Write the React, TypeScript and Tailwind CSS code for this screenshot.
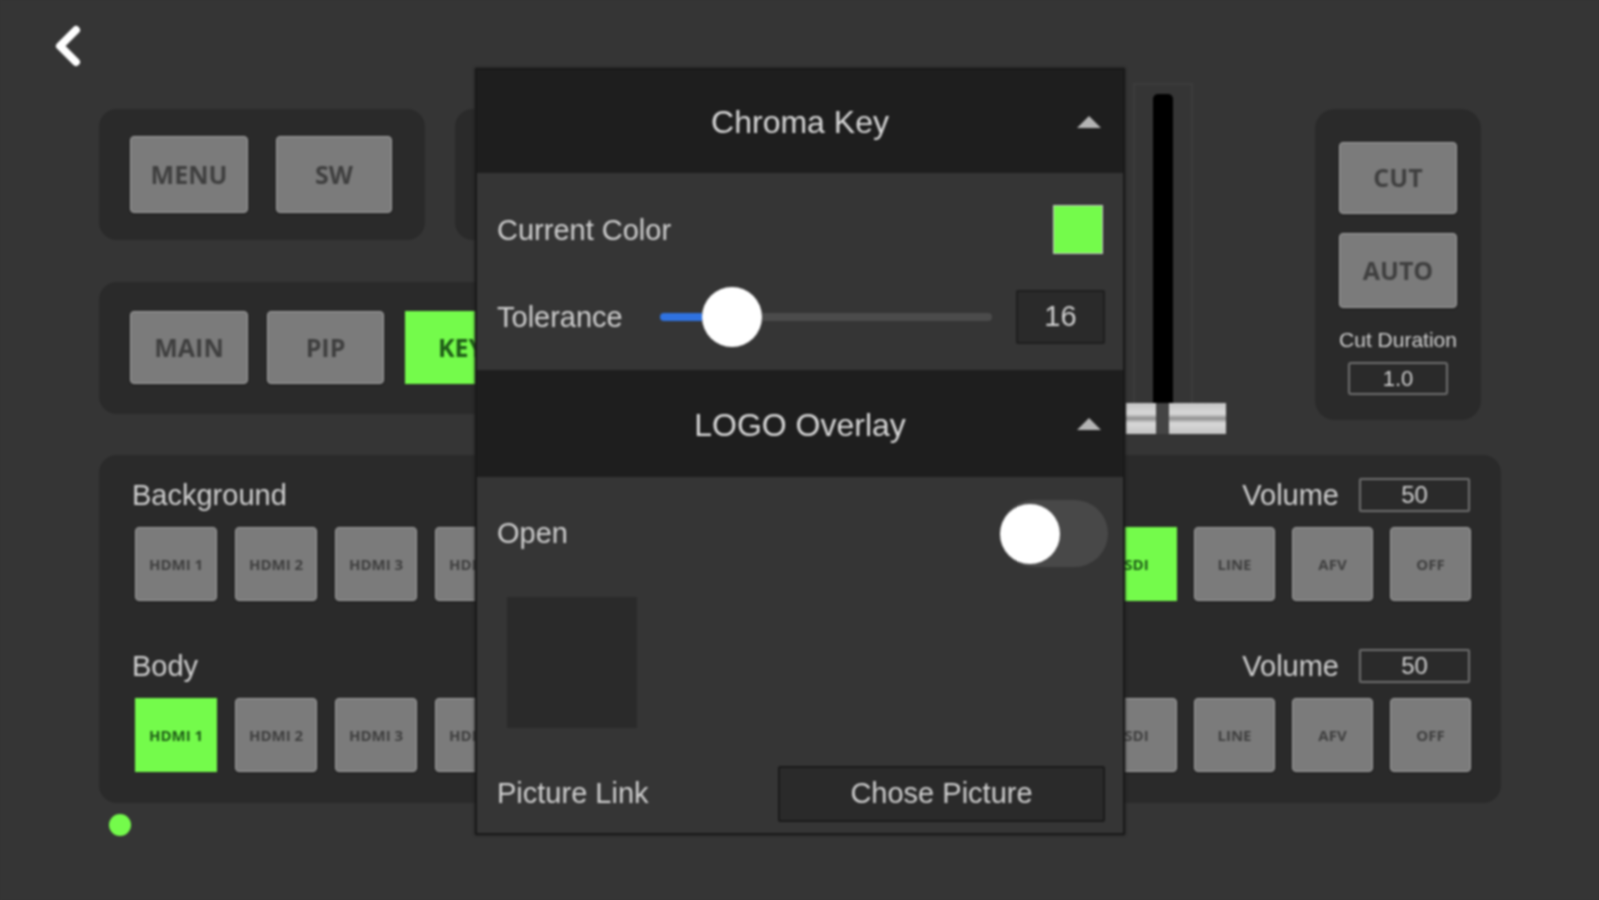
const font = "font-['Liberation_Sans',Arial,sans-serif]";

const Btn = ({ label, active, className }: { label: string; active?: boolean; className: string }) => (
  <div
    className={`flex items-center justify-center shrink-0 font-['Open_Sans',sans-serif] font-bold ${className} ${
      active
        ? "bg-[#74fb4b] text-[#1f5c18]"
        : "bg-[#7b7b7b] text-[#3f3f3f] rounded-[4px] border border-[#a2a2a2] shadow-[0_1px_2px_#1e1e1e]"
    }`}
  >
    {label}
  </div>
);

const Caret = () => (
  <svg width="26" height="14" viewBox="0 0 26 14" className="shrink-0">
    <path d="M13 1 L25 13 L1 13 Z" fill="#b4b4b4" />
  </svg>
);

const PopupHeader = ({ title, className }: { title: string; className: string }) => (
  <div className={`relative flex items-center justify-center bg-[#1e1e1e] text-[32px] text-[#d8d8d8] ${className}`}>
    <span>{title}</span>
    <div className="absolute right-[21px] top-1/2 -translate-y-1/2 flex">
      <Caret />
    </div>
  </div>
);

const SourceRow = ({
  label,
  active,
  className,
}: {
  label: string;
  active: "first" | "sdi";
  className: string;
}) => (
  <div className={className}>
    <div className="flex items-center justify-between h-[34px] mb-[15px] pr-[1px]">
      <span className="text-[29px] text-[#cfcfcf] -ml-[3px] pt-[2px]">{label}</span>
      <div className="flex items-center gap-[20px]">
        <span className="text-[29px] text-[#cfcfcf] pt-[2px]">Volume</span>
        <div className="w-[111px] h-[34px] border-2 border-[#6e6e6e] rounded-[2px] flex items-center justify-center text-[24px] text-[#cfcfcf] leading-none">
          50
        </div>
      </div>
    </div>
    <div className="flex justify-between">
      <div className="flex gap-[18px]">
        <Btn label="HDMI 1" active={active === "first"} className="w-[82px] h-[74px] text-[15px]" />
        <Btn label="HDMI 2" className="w-[82px] h-[74px] text-[15px]" />
        <Btn label="HDMI 3" className="w-[82px] h-[74px] text-[15px]" />
        <Btn label="HDMI 4" className="w-[82px] h-[74px] text-[15px]" />
      </div>
      <div className="flex gap-[17px]">
        <Btn label="SDI" active={active === "sdi"} className="w-[81px] h-[74px] text-[15px]" />
        <Btn label="LINE" className="w-[81px] h-[74px] text-[15px]" />
        <Btn label="AFV" className="w-[81px] h-[74px] text-[15px]" />
        <Btn label="OFF" className="w-[81px] h-[74px] text-[15px]" />
      </div>
    </div>
  </div>
);

export default function App() {
  return (
    <div className="w-[1599px] h-[900px] overflow-hidden bg-[#353535]">
      <div className={`relative w-[1599px] h-[900px] bg-[#353535] blur-[1px] ${font}`}>
        {/* back */}
        <div className="h-[83px] pl-[54px] pt-[24px]">
          <svg width="28" height="44" viewBox="0 0 28 44">
            <path d="M22 6 L6 22 L22 38" fill="none" stroke="#fff" strokeWidth="8" strokeLinecap="round" strokeLinejoin="round" />
          </svg>
        </div>

        {/* top controls */}
        <div className="flex h-[372px] pl-[99px]">
          <div className="w-[1010px] pt-[26px] flex flex-col gap-[42px]">
            <div className="flex gap-[30px]">
              <div className="w-[326px] h-[131px] rounded-[18px] bg-[#2a2a2a] pl-[31px] pt-[27px] flex gap-[28px]">
                <Btn label="MENU" className="w-[118px] h-[77px] text-[25px]" />
                <Btn label="SW" className="w-[116px] h-[77px] text-[25px]" />
              </div>
              <div className="flex-1 h-[131px] rounded-[18px] bg-[#2a2a2a]" />
            </div>
            <div className="h-[132px] rounded-[18px] bg-[#2a2a2a] pl-[31px] pt-[29px] flex gap-[19px]">
              <Btn label="MAIN" className="w-[118px] h-[73px] text-[25px]" />
              <Btn label="PIP" className="w-[117px] h-[73px] text-[25px]" />
              <Btn label="KEY" active className="w-[112px] h-[73px] text-[25px] ml-[2px]" />
            </div>
          </div>

          {/* fader */}
          <div className="relative ml-[24px] w-[60px] h-[322px] border-2 border-[#3c3c3c] flex justify-center pt-[9px]">
            <div className="w-[20px] h-[310px] bg-black rounded-t-[5px]" />
            <div className="absolute left-[-9px] top-[318px] flex h-[31px] w-[100px]">
              <div className="w-[30px] bg-[linear-gradient(#c4c4c4_0%,#d8d8d8_35%,#8f8f8f_50%,#d8d8d8_65%,#c4c4c4_100%)]" />
              <div className="w-[13px] bg-[#444]" />
              <div className="flex-1 bg-[linear-gradient(#c4c4c4_0%,#d8d8d8_35%,#8f8f8f_50%,#d8d8d8_65%,#c4c4c4_100%)]" />
            </div>
          </div>

          {/* cut */}
          <div className="ml-[122px] mt-[26px] w-[166px] h-[311px] rounded-[20px] bg-[#2a2a2a] pt-[33px] flex flex-col items-center">
            <Btn label="CUT" className="w-[118px] h-[72px] text-[25px]" />
            <Btn label="AUTO" className="w-[118px] h-[75px] text-[25px] mt-[19px]" />
            <span className="mt-[21px] text-[21px] leading-[22px] text-[#cfcfcf] whitespace-nowrap">Cut Duration</span>
            <div className="mt-[11px] w-[100px] h-[33px] border-2 border-[#6e6e6e] rounded-[3px] flex items-center justify-center text-[22px] text-[#cfcfcf] leading-none">
              1.0
            </div>
          </div>
        </div>

        {/* sources */}
        <div className="ml-[99px] w-[1402px] h-[348px] rounded-[18px] bg-[#2a2a2a] pl-[36px] pr-[30px] pt-[23px]">
          <SourceRow label="Background" active="sdi" className="" />
          <SourceRow label="Body" active="first" className="mt-[48px]" />
        </div>

        <div className="ml-[109px] mt-[11px] w-[22px] h-[22px] rounded-full bg-[#74fb4b]" />

        {/* popup over the panels */}
        <div className="absolute left-[475px] top-[68px] w-[650px] border-2 border-[#191919] bg-[#353535] shadow-[0_0_3px_#1e1e1e]">
          <PopupHeader title="Chroma Key" className="h-[103px]" />
          <div className="h-[197px] pl-[20px] pr-[18px] pt-[32px] text-[29px] text-[#cfcfcf]">
            <div className="flex items-center justify-between h-[49px] pr-[2px]">
              <span className="pt-[2px]">Current Color</span>
              <div className="w-[50px] h-[49px] bg-[#74fb4b] border border-[#c8c8c8]" />
            </div>
            <div className="flex items-center h-[54px] mt-[36px]">
              <span className="w-[163px] shrink-0 pt-[2px]">Tolerance</span>
              <div className="flex items-center flex-1">
                <div className="w-[42px] h-[8px] rounded-l-full bg-[#2f72e0]" />
                <div className="w-[60px] h-[60px] rounded-full bg-white shrink-0" />
                <div className="flex-1 h-[8px] rounded-r-full bg-[#4b4b4b]" />
              </div>
              <div className="ml-[24px] w-[89px] h-[54px] bg-[#2a2a2a] border-2 border-[#1e1e1e] rounded-[2px] flex items-center justify-center">
                16
              </div>
            </div>
          </div>
          <PopupHeader title="LOGO Overlay" className="h-[107px] pt-[3px]" />
          <div className="h-[356px] pl-[20px] pr-[18px] pt-[23px] text-[29px] text-[#cfcfcf]">
            <div className="flex items-center justify-between h-[67px] -mr-[3px]">
              <span>Open</span>
              <div className="w-[108px] h-[67px] rounded-full bg-[#484848] flex items-center">
                <div className="w-[60px] h-[60px] rounded-full bg-white" />
              </div>
            </div>
            <div className="ml-[10px] mt-[30px] w-[130px] h-[131px] bg-[#2a2a2a]" />
            <div className="flex items-center justify-between h-[56px] mt-[38px]">
              <span>Picture Link</span>
              <div className="w-[327px] h-[56px] bg-[#2a2a2a] border-2 border-[#1a1a1a] rounded-[2px] flex items-center justify-center">
                Chose Picture
              </div>
            </div>
          </div>
        </div>
      </div>
    </div>
  );
}
